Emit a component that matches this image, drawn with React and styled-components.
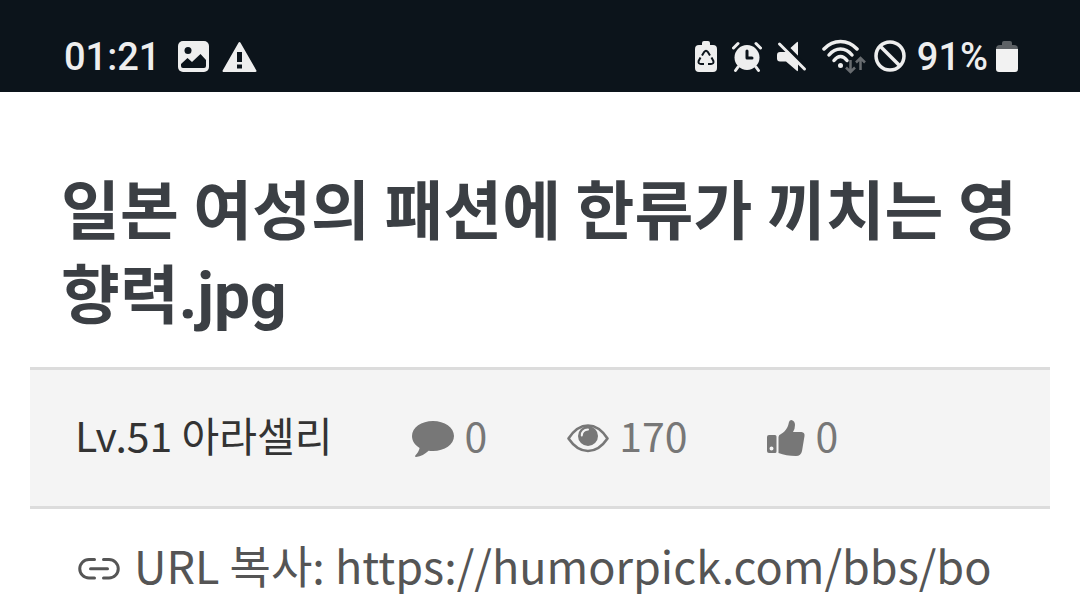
import React from 'react'
import styled, { createGlobalStyle } from 'styled-components'

const GlobalStyle = createGlobalStyle`
  * {
    box-sizing: border-box;
  }

  body {
    margin: 0;
    background: #ffffff;
    font-family: 'Noto Sans CJK KR', sans-serif;
  }
`

const StyledStatusBar = styled.header`
  display: flex;
  justify-content: space-between;
  align-items: center;
  height: 92px;
  padding: 22px 62px 0 64px;
  background: #0c141b;
  color: #eeeeee;
  font-family: Roboto, sans-serif;
  font-size: 38px;
  font-weight: 500;
  line-height: 48px;
`

const StyledStatusGroup = styled.div`
  display: flex;
  align-items: center;
  gap: ${({ $gap }) => $gap}px;
`

const StyledIcon = styled.svg`
  display: block;
  flex: none;
`

const StyledTitle = styled.h1`
  margin: 0;
  padding: 72px 60px 35px 61px;
  color: #3b3f44;
  font-size: 64px;
  font-weight: 700;
  line-height: 84px;
`

const StyledLatin = styled.span`
  font-family: Roboto, sans-serif;
  line-height: 64px;
`

const StyledInfo = styled.section`
  display: flex;
  align-items: center;
  gap: 80px;
  height: 142px;
  margin: 0 30px;
  padding: 0 45px;
  border-top: 3px solid #dcdcdc;
  border-bottom: 3px solid #dcdcdc;
  background: #f4f4f4;
  color: #777777;
  font-size: 41px;
  line-height: 60px;
`

const StyledAuthor = styled.span`
  padding-bottom: 8px;
  color: #333333;
`

const StyledStat = styled.span`
  display: flex;
  align-items: center;
  gap: 10px;
`

const StyledCount = styled.span`
  padding-bottom: 8px;
`

const StyledUrlRow = styled.div`
  display: flex;
  align-items: center;
  gap: 14px;
  padding: 24px 76px 0 78px;
  color: #555555;
  font-size: 45px;
  line-height: 64px;
`

const StyledUrlText = styled.span`
  padding-bottom: 8px;
  white-space: nowrap;
`

const StyledUrl = styled.a`
  color: inherit;
  text-decoration: none;
`

const PictureIcon = () => (
  <StyledIcon width="32" height="32" viewBox="0 0 32 32" aria-hidden="true">
    <rect x="0" y="0" width="31" height="31" rx="5" fill="#eeeeee" />
    <circle cx="10" cy="9.5" r="3.5" fill="#0c141b" />
    <path d="M3 23 L9.5 17 L14 21 L22.500 13 L28 19 V25 Q28 27 26 27 H5 Q3 27 3 25 Z" fill="#0c141b" />
  </StyledIcon>
)

const WarningIcon = () => (
  <StyledIcon width="35" height="32" viewBox="0 0 35 32" aria-hidden="true">
    <path d="M17.500 2 L33.500 30 H1.500 Z" fill="#eeeeee" stroke="#eeeeee" strokeWidth="2" strokeLinejoin="round" />
    <path d="M15 11 H20 V21 H15 Z M15 23.500 H20 V27.500 H15 Z" fill="#0c141b" />
  </StyledIcon>
)

const RecycleBatteryIcon = () => (
  <StyledIcon width="22" height="32" viewBox="0 0 22 32" aria-hidden="true">
    <path d="M7 4 V2 Q7 0 9 0 H13 Q15 0 15 2 V4 H18 Q22 4 22 8 V27 Q22 31 18 31 H4 Q0 31 0 27 V8 Q0 4 4 4 Z" fill="#eeeeee" />
    <g fill="none" stroke="#0c141b" strokeWidth="2" strokeLinejoin="round">
      <path d="M7 14.500 L9.300 10.800 Q11 8.500 12.700 10.800 L15 14.500" />
      <path d="M16.500 16.500 L18.400 20 Q19 23 16 23 H13" />
      <path d="M9 23 H6 Q3 23 3.600 20 L5.500 16.500" />
    </g>
  </StyledIcon>
)

const AlarmIcon = () => (
  <StyledIcon width="30" height="32" viewBox="0 0 30 32" aria-hidden="true">
    <circle cx="15" cy="16.500" r="12.500" fill="#eeeeee" />
    <g fill="none" stroke="#eeeeee" strokeWidth="3" strokeLinecap="round">
      <path d="M1.500 7 L6 2.500 M24 2.500 L28.500 7 M6 26 L3.500 29.500 M24 26 L26.500 29.500" />
    </g>
    <path d="M15 10 V17 H20" fill="none" stroke="#0c141b" strokeWidth="3" strokeLinecap="round" strokeLinejoin="round" />
  </StyledIcon>
)

const MuteIcon = () => (
  <StyledIcon width="30" height="32" viewBox="0 0 30 32" aria-hidden="true">
    <path d="M0 14 Q0 11 3 11 H9 L19.500 1.500 Q21 0 21 2 V29 Q21 31 19.500 29.500 L9 20.500 H3 Q0 20.500 0 17.500 Z" fill="#eeeeee" />
    <path d="M5 1.500 L30 26.500" stroke="#0c141b" strokeWidth="4" />
    <path d="M2.500 3 L27.500 28" stroke="#eeeeee" strokeWidth="3" strokeLinecap="round" />
  </StyledIcon>
)

const WifiIcon = () => (
  <StyledIcon width="44" height="36" viewBox="0 0 44 36" aria-hidden="true">
    <g fill="none" stroke="#eeeeee" strokeWidth="3.500" strokeLinecap="round">
      <path d="M2 10 Q9 2.500 18.500 2.500 Q28 2.500 35 10" />
      <path d="M7 16 Q12 10 18.500 10 Q25 10 30 16" />
      <path d="M12 21.500 Q15 17.500 18.500 17.500 Q22 17.500 25 21.500" />
    </g>
    <circle cx="18.500" cy="26.500" r="2.500" fill="#eeeeee" />
    <g fill="none" stroke="#686c70" strokeWidth="2.500">
      <path d="M28.500 21 V33 M24 28.500 L28.500 33 L33 28.500" />
      <path d="M38.500 31 V19 M34 23.500 L38.500 19 L43 23.500" />
    </g>
  </StyledIcon>
)

const BlockedIcon = () => (
  <StyledIcon width="35" height="34" viewBox="0 0 35 34" aria-hidden="true">
    <g fill="none" stroke="#eeeeee" strokeWidth="3.500">
      <circle cx="16" cy="16" r="14" />
      <path d="M6 6 L26 26" />
    </g>
  </StyledIcon>
)

const BatteryIcon = () => (
  <StyledIcon width="22" height="33" viewBox="0 0 22 33" aria-hidden="true">
    <path d="M6 4 V2 Q6 0 8 0 H14 Q16 0 16 2 V4 H18 Q22 4 22 8 V9 H0 V8 Q0 4 4 4 Z" fill="#5d6165" />
    <path d="M0 8 H22 V28 Q22 31 19 31 H3 Q0 31 0 28 Z" fill="#f2f2f2" />
  </StyledIcon>
)

const CommentIcon = () => (
  <StyledIcon width="42" height="40" viewBox="0 0 42 40" role="img" aria-label="댓글">
    <path
      d="M21 3 C32.600 3 42 9.500 42 18 C42 26.500 32.600 33 21 33 C19.500 33 18 32.900 16.600 32.700 C13 36 9 38.500 4 39 Q2.600 39 3.300 37.500 C5.500 35 7 33 7.600 30 C2.800 27 0 23 0 18 C0 9.500 9.400 3 21 3 Z"
      fill="currentColor"
    />
  </StyledIcon>
)

const EyeIcon = () => (
  <StyledIcon width="42" height="30" viewBox="0 0 42 30" role="img" aria-label="조회">
    <path
      d="M1.500 15.500 Q10 2.500 21 2.500 Q32 2.500 40.500 15.500 Q32 28 21 28 Q10 28 1.500 15.500 Z"
      fill="none"
      stroke="currentColor"
      strokeWidth="2.600"
      strokeLinejoin="round"
    />
    <circle cx="21" cy="13" r="10" fill="currentColor" />
    <path d="M14.800 12.500 Q15 7 21 6.600" fill="none" stroke="#f4f4f4" strokeWidth="2" strokeLinecap="round" />
  </StyledIcon>
)

const ThumbIcon = () => (
  <StyledIcon width="38" height="38" viewBox="0 0 38 38" role="img" aria-label="추천">
    <path
      d="M2 16 H8 Q9.500 16 9.500 17.500 V32.500 Q9.500 34 8 34 H2 Q0 34 0 32 V18 Q0 16 2 16 Z M4.500 27.500 A2 2 0 1 0 4.500 31.500 A2 2 0 1 0 4.500 27.500 Z"
      fill="currentColor"
      fillRule="evenodd"
    />
    <path
      d="M11.500 18 Q11.500 16 14 15 Q18 13 20.500 8 Q21.500 5.500 22 3 Q22.500 1 24.500 1 Q28 2 28 6 Q28 10 26 13 H34.500 Q38 13.500 37.500 17 L35 32 Q34 37 29 37 Q19 37 11.500 34 Z"
      fill="currentColor"
    />
  </StyledIcon>
)

const LinkIcon = () => (
  <StyledIcon width="42" height="24" viewBox="0 0 42 24" aria-hidden="true">
    <g fill="none" stroke="currentColor" strokeWidth="3" strokeLinecap="round">
      <path d="M16.500 2.500 H11 A9.200 9.200 0 0 0 11 21 H16.500" />
      <path d="M25.500 2.500 H31 A9.200 9.200 0 0 1 31 21 H25.500" />
      <path d="M12.500 11.750 H29.500" />
    </g>
  </StyledIcon>
)

export default function App() {
  return (
    <>
      <GlobalStyle />
      <StyledStatusBar>
        <StyledStatusGroup $gap={18}>
          <span>01:21</span>
          <StyledStatusGroup $gap={12}>
            <PictureIcon />
            <WarningIcon />
          </StyledStatusGroup>
        </StyledStatusGroup>
        <StyledStatusGroup $gap={8}>
          <StyledStatusGroup $gap={15}>
            <RecycleBatteryIcon />
            <AlarmIcon />
            <MuteIcon />
            <WifiIcon />
          </StyledStatusGroup>
          <BlockedIcon />
          <span>91%</span>
          <BatteryIcon />
        </StyledStatusGroup>
      </StyledStatusBar>
      <main>
        <StyledTitle>
          일본 여성의 패션에 한류가 끼치는 영향력<StyledLatin>.jpg</StyledLatin>
        </StyledTitle>
        <StyledInfo>
          <StyledAuthor>Lv.51 아라셀리</StyledAuthor>
          <StyledStat>
            <CommentIcon />
            <StyledCount>0</StyledCount>
          </StyledStat>
          <StyledStat>
            <EyeIcon />
            <StyledCount>170</StyledCount>
          </StyledStat>
          <StyledStat>
            <ThumbIcon />
            <StyledCount>0</StyledCount>
          </StyledStat>
        </StyledInfo>
        <StyledUrlRow>
          <LinkIcon />
          <StyledUrlText>
            URL 복사: <StyledUrl href="https://humorpick.com/bbs/bo">https://humorpick.com/bbs/bo</StyledUrl>
          </StyledUrlText>
        </StyledUrlRow>
      </main>
    </>
  )
}
